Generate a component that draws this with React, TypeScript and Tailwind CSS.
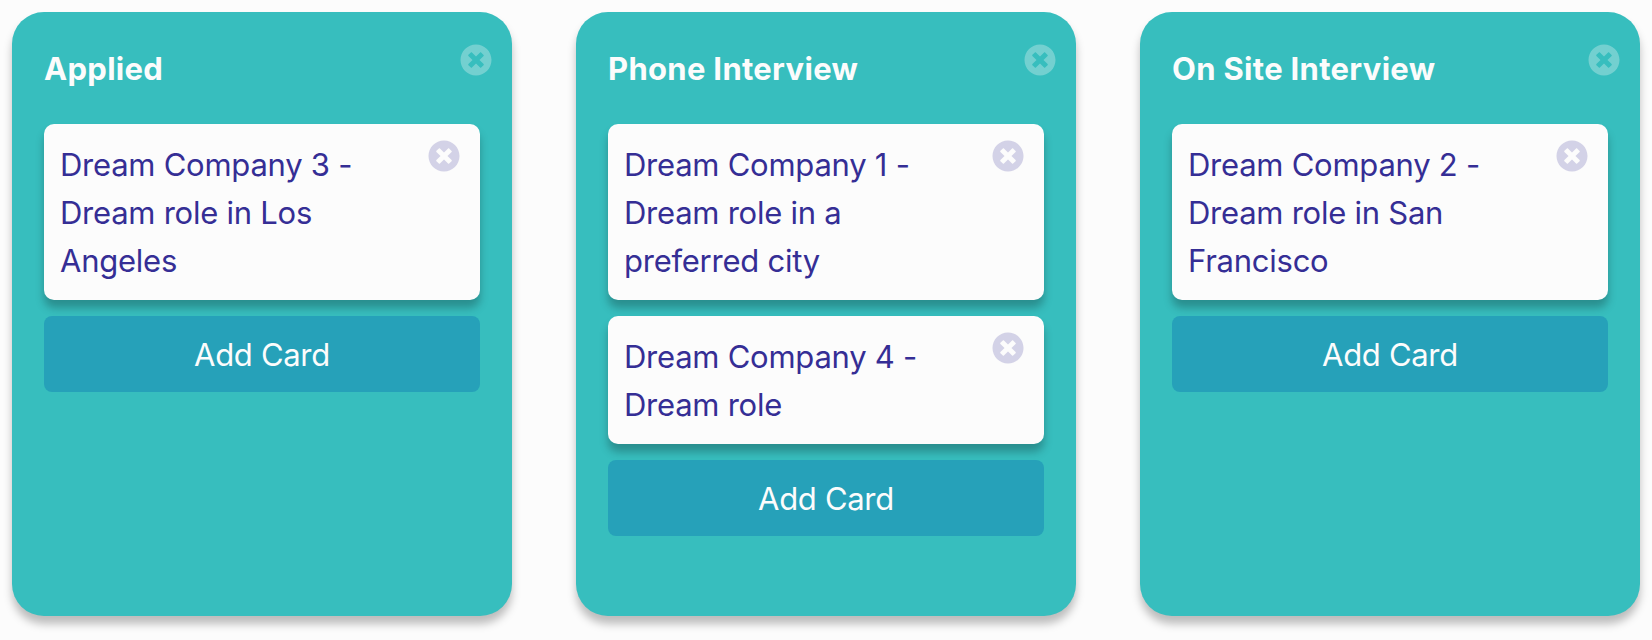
import { FaTimesCircle } from "react-icons/fa";

const columns = [
  { title: "Applied", cards: ["Dream Company 3 - Dream role in Los Angeles"] },
  {
    title: "Phone Interview",
    cards: ["Dream Company 1 - Dream role in a preferred city", "Dream Company 4 - Dream role"],
  },
  { title: "On Site Interview", cards: ["Dream Company 2 - Dream role in San Francisco"] },
];

function Card({ text }: { text: string }) {
  return (
    <article className="flex items-start justify-between rounded-[10px] bg-[#fcfcfc] pb-[15px] pl-4 pr-5 pt-[17px] text-[#352e95] shadow-[0_8px_8px_rgba(0,0,0,0.25)]">
      <p className="w-[316px] text-[31px] leading-[48px] tracking-[-0.008em]">{text}</p>
      <button aria-label="Remove card" className="-mt-px opacity-20">
        <FaTimesCircle className="size-8" />
      </button>
    </article>
  );
}

function Column({ title, cards }: { title: string; cards: string[] }) {
  return (
    <section className="flex h-[604px] w-[500px] shrink-0 flex-col rounded-[32px] bg-[#37bebe] px-8 pt-8 shadow-[0_8px_8px_rgba(0,0,0,0.25)]">
      <header className="-mr-3 flex h-20 items-start justify-between text-[#fcfcfc]">
        <h2 className="pt-px text-[31px] font-bold leading-[48px] tracking-[0.01em]">{title}</h2>
        <button aria-label="Remove column" className="opacity-30">
          <FaTimesCircle className="size-8" />
        </button>
      </header>
      <div className="flex flex-col gap-4">
        {cards.map((text) => (
          <Card key={text} text={text} />
        ))}
        <button className="h-[76px] rounded-lg bg-[#26a1b9] pt-px text-[31px] leading-[48px] tracking-[-0.01em] text-[#fcfcfc]">
          Add Card
        </button>
      </div>
    </section>
  );
}

export default function App() {
  return (
    <main className="flex h-[640px] gap-16 overflow-hidden bg-[#fcfcfc] p-3 font-['Inter',sans-serif]">
      {columns.map((column) => (
        <Column key={column.title} {...column} />
      ))}
    </main>
  );
}
